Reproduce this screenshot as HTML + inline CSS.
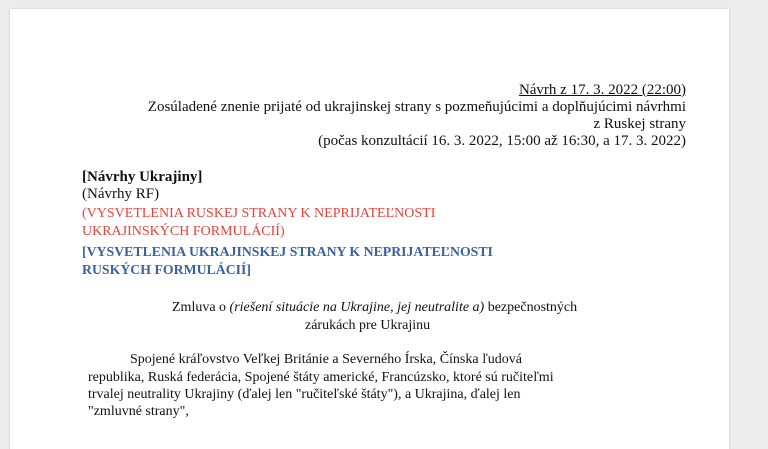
<!DOCTYPE html>
<html><head><meta charset="utf-8"><style>
body{margin:0;width:768px;height:440px;background:#ececec;overflow:hidden;position:relative;font-family:"Liberation Serif",serif;color:#111}
.page{position:absolute;left:10px;top:9px;width:719px;height:440px;background:#fff;box-shadow:0 0 2px #bbb}
.t{position:absolute;white-space:nowrap;font-size:15px;line-height:17px}
.r{right:82px;text-align:right}
.red{color:#e8413a;font-size:14px}
.blue{color:#3a62a0;font-weight:bold;font-size:13.8px}
.p{font-size:14px}
</style></head><body><div class="page"></div>
<div class="t r" style="top:82px;text-decoration:underline">Návrh z 17. 3. 2022 (22:00)</div>
<div class="t r" style="top:99px">Zosúladené znenie prijaté od ukrajinskej strany s pozmeňujúcimi a doplňujúcimi návrhmi</div>
<div class="t r" style="top:116px">z Ruskej strany</div>
<div class="t r" style="top:133px">(počas konzultácií 16. 3. 2022, 15:00 až 16:30, a 17. 3. 2022)</div>
<div class="t" style="left:82px;top:169px;font-weight:bold">[Návrhy Ukrajiny]</div>
<div class="t" style="left:82px;top:186px">(Návrhy RF)</div>
<div class="t red" style="left:82px;top:205px">(VYSVETLENIA RUSKEJ STRANY K NEPRIJATEĽNOSTI</div>
<div class="t red" style="left:82px;top:223px">UKRAJINSKÝCH FORMULÁCIÍ)</div>
<div class="t blue" style="left:82px;top:243px">[VYSVETLENIA UKRAJINSKEJ STRANY K NEPRIJATEĽNOSTI</div>
<div class="t blue" style="left:82px;top:261px">RUSKÝCH FORMULÁCIÍ]</div>
<div class="t p" style="left:172px;top:299px">Zmluva o <i>(riešení situácie na Ukrajine, jej neutralite a)</i> bezpečnostných</div>
<div class="t p" style="left:305px;top:317px">zárukách pre Ukrajinu</div>
<div class="t p" style="left:130px;top:351px">Spojené kráľovstvo Veľkej Británie a Severného Írska, Čínska ľudová</div>
<div class="t p" style="left:88px;top:369px">republika, Ruská federácia, Spojené štáty americké, Francúzsko, ktoré sú ručiteľmi</div>
<div class="t p" style="left:88px;top:386px">trvalej neutrality Ukrajiny (ďalej len "ručiteľské štáty"), a Ukrajina, ďalej len</div>
<div class="t p" style="left:88px;top:403px">"zmluvné strany",</div>
</body></html>
